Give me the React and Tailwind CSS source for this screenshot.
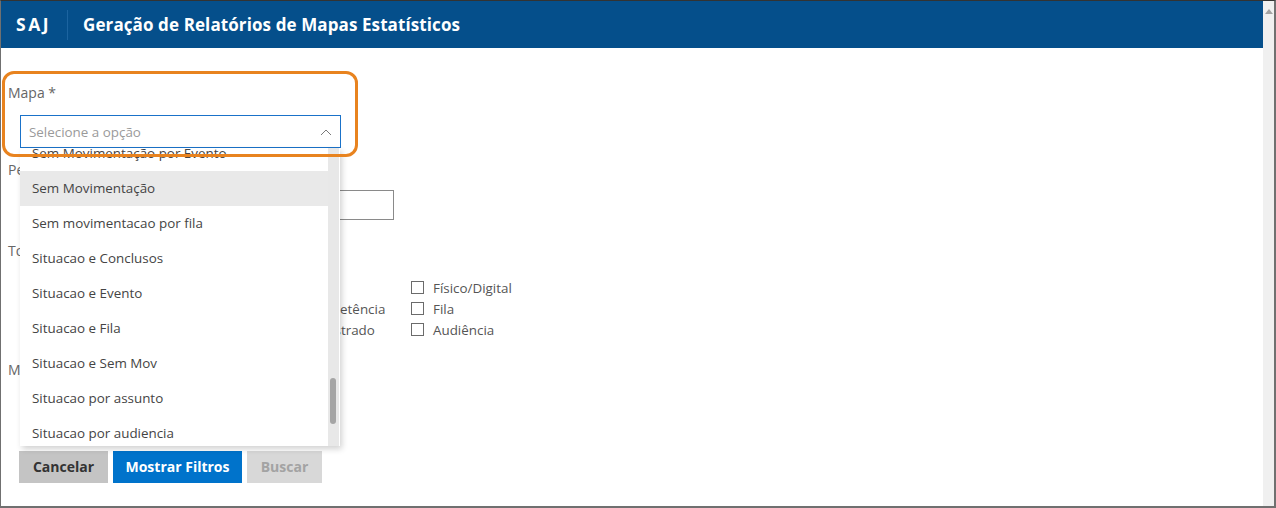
const ITEMS = [
  'Sem Movimentação por Evento',
  'Sem Movimentação',
  'Sem movimentacao por fila',
  'Situacao e Conclusos',
  'Situacao e Evento',
  'Situacao e Fila',
  'Situacao e Sem Mov',
  'Situacao por assunto',
  'Situacao por audiencia',
]

const CHECKS = [
  ['Natureza', 'Foro', 'Físico/Digital'],
  ['Assunto', 'Competência', 'Fila'],
  ['Vara', 'Cadastrado', 'Audiência'],
]

function Checkbox({ label }) {
  return (
    <label className="flex items-center gap-[9px] h-[21px] whitespace-nowrap">
      <span className="w-[13px] h-[13px] shrink-0 border border-[#6b6b6b] bg-white" />
      <span>{label}</span>
    </label>
  )
}

export default function App() {
  return (
    <div
      className="w-[1276px] h-[508px] flex border-t border-t-[#333] border-l border-l-[#707070] border-r-2 border-r-[#707070] border-b-2 border-b-[#707070] bg-white overflow-hidden"
      style={{ fontFamily: '"Open Sans", "Noto Sans", sans-serif' }}
    >
      <div className="relative flex-1 flex flex-col">
        {/* Header */}
        <div className="h-[47px] bg-[#054f8b] flex items-center text-white font-bold shrink-0">
          <span className="pl-[15px] text-[17.5px] tracking-[2.5px]">SAJ</span>
          <span className="ml-[16px] w-px h-[30px] bg-[#1c64a0]" />
          <span className="ml-[15px] text-[17px] tracking-[0.1px]">Geração de Relatórios de Mapas Estatísticos</span>
        </div>

        {/* Form */}
        <div className="px-[7px] text-[13.4px] text-[#666] leading-[20px]">
          <div className="pt-[35px] text-[14px]">Mapa *</div>
          <div className="ml-[12px] mt-[12px] w-[321px] h-[33px] border border-[#1a72c9] flex items-center pl-[8px] pr-[8px] justify-between">
            <span className="text-[#9a9a9a]">Selecione a opção</span>
            <svg width="12" height="8" viewBox="0 0 12 8">
              <polyline points="1,7 6,2 11,7" fill="none" stroke="#7a7a7a" strokeWidth="1" />
            </svg>
          </div>

          <div className="mt-[12px] text-[14px]">Período *</div>
          <div className="ml-[12px] mt-[10px] w-[374px] h-[30px] border border-[#8a8a8a]" />

          <div className="mt-[21px] text-[14px]">Totalizadores</div>
          <div className="mt-[16px] ml-[12px] grid grid-cols-[261px_130px_auto] text-[#555]">
            {CHECKS.map((row) => row.map((c) => <Checkbox key={c} label={c} />))}
          </div>

          <div className="mt-[20px] text-[14px]">Modelo</div>

          <div className="mt-[71px] ml-[11px] flex gap-[5px] text-[14px] font-bold">
            <button className="h-[32px] w-[89px] bg-[#c4c4c4] text-[#333]">Cancelar</button>
            <button className="h-[32px] w-[129px] bg-[#0073cb] text-white">Mostrar Filtros</button>
            <button className="h-[32px] w-[75px] bg-[#d8d8d8] text-[#a3a3a3]">Buscar</button>
          </div>
        </div>

        {/* Dropdown menu */}
        <div className="absolute left-[19px] top-[147px] w-[320px] h-[298px] bg-white overflow-hidden shadow-[2px_3px_6px_rgba(0,0,0,0.18)] flex">
          <div className="flex-1 -mt-[12px]">
            {ITEMS.map((it, i) => (
              <div
                key={it}
                className={`h-[35px] flex items-center pl-[12px] text-[13.4px] text-[#444] ${i === 1 ? 'bg-[#e9e9e9]' : ''}`}
              >
                {it}
              </div>
            ))}
          </div>
          <div className="w-[11px] bg-[#e8e8e8] relative mr-px">
            <div className="absolute left-[2px] top-[230px] w-[6px] h-[46px] rounded-full bg-[#a5a5a5]" />
          </div>
        </div>

        {/* Orange highlight */}
        <div className="absolute left-[1px] top-[70px] w-[356px] h-[86px] border-[3px] border-[#e8831f] rounded-[12px]" />
      </div>

      {/* Page scrollbar */}
      <div className="w-[11px] bg-[#f0f0f0] flex justify-center pt-[8px]">
        <svg width="8" height="5" viewBox="0 0 8 5">
          <polygon points="0,5 4,0 8,5" fill="#a3a3a3" />
        </svg>
      </div>
    </div>
  )
}
